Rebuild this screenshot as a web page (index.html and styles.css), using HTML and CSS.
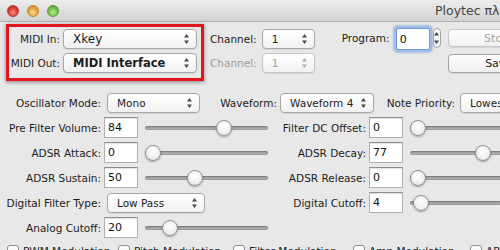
FILE: index.html
```html
<!DOCTYPE html>
<html lang="en">
<head>
    <meta charset="UTF-8">
    <meta name="viewport" content="width=device-width, initial-scale=1.0">
    <title>Ploytec πλ2</title>
    <link rel="stylesheet" href="styles.css">
</head>
<body>

<div class="window">
    <div class="titlebar">
        <span class="light close"></span>
        <span class="light minimize"></span>
        <span class="light zoom"></span>
        <span class="title">Ploytec πλ2</span>
    </div>

    <div class="top">
        <div class="midi-box">
            <div class="top-row">
                <label class="midi-label">MIDI In:</label>
                <div class="popup midi-popup">
                    <span>Xkey</span>
                    <svg class="arrows" width="5" height="10" viewBox="0 0 5 10"><path d="M2.5 0L5 3.5H0Z M2.5 10L5 6.5H0Z"/></svg>
                </div>
            </div>
            <div class="top-row">
                <label class="midi-label">MIDI Out:</label>
                <div class="popup midi-popup bold">
                    <span>MIDI Interface</span>
                    <svg class="arrows" width="5" height="10" viewBox="0 0 5 10"><path d="M2.5 0L5 3.5H0Z M2.5 10L5 6.5H0Z"/></svg>
                </div>
            </div>
        </div>

        <div class="channels">
            <div class="top-row">
                <label>Channel:</label>
                <div class="popup channel-popup">
                    <span>1</span>
                    <svg class="arrows" width="5" height="10" viewBox="0 0 5 10"><path d="M2.5 0L5 3.5H0Z M2.5 10L5 6.5H0Z"/></svg>
                </div>
            </div>
            <div class="top-row disabled">
                <label>Channel:</label>
                <div class="popup channel-popup">
                    <span>1</span>
                    <svg class="arrows" width="5" height="10" viewBox="0 0 5 10"><path d="M2.5 0L5 3.5H0Z M2.5 10L5 6.5H0Z"/></svg>
                </div>
            </div>
        </div>

        <div class="program">
            <label for="program">Program:</label>
            <input type="text" id="program" class="field focused" value="0">
            <div class="stepper">
                <svg width="5" height="12" viewBox="0 0 5 12"><path d="M2.5 0L5 3.5H0Z M2.5 12L5 8.5H0Z"/></svg>
            </div>
        </div>

        <div class="buttons">
            <button type="button" class="push" disabled>Store</button>
            <button type="button" class="push">Save</button>
        </div>
    </div>

    <div class="first-row">
        <label class="label">Oscillator Mode:</label>
        <div class="popup mode-popup">
            <span>Mono</span>
            <svg class="arrows" width="5" height="10" viewBox="0 0 5 10"><path d="M2.5 0L5 3.5H0Z M2.5 10L5 6.5H0Z"/></svg>
        </div>
        <label class="waveform-label">Waveform:</label>
        <div class="popup wave-popup">
            <span>Waveform 4</span>
            <svg class="arrows" width="5" height="10" viewBox="0 0 5 10"><path d="M2.5 0L5 3.5H0Z M2.5 10L5 6.5H0Z"/></svg>
        </div>
        <label class="priority-label">Note Priority:</label>
        <div class="popup priority-popup">
            <span>Lowest</span>
            <svg class="arrows" width="5" height="10" viewBox="0 0 5 10"><path d="M2.5 0L5 3.5H0Z M2.5 10L5 6.5H0Z"/></svg>
        </div>
    </div>

    <div class="params">
        <label class="label">Pre Filter Volume:</label>
        <div class="cell"><input type="text" class="field" value="84"></div>
        <input type="range" class="slider" min="0" max="127" value="84">
        <label class="label">Filter DC Offset:</label>
        <div class="cell"><input type="text" class="field" value="0"></div>
        <input type="range" class="slider" min="0" max="127" value="0">

        <label class="label">ADSR Attack:</label>
        <div class="cell"><input type="text" class="field" value="0"></div>
        <input type="range" class="slider" min="0" max="127" value="0">
        <label class="label">ADSR Decay:</label>
        <div class="cell"><input type="text" class="field" value="77"></div>
        <input type="range" class="slider" min="0" max="127" value="77">

        <label class="label">ADSR Sustain:</label>
        <div class="cell"><input type="text" class="field" value="50"></div>
        <input type="range" class="slider" min="0" max="127" value="50">
        <label class="label">ADSR Release:</label>
        <div class="cell"><input type="text" class="field" value="0"></div>
        <input type="range" class="slider" min="0" max="127" value="0">

        <label class="label">Digital Filter Type:</label>
        <div class="cell span-2">
            <div class="popup filter-popup">
                <span>Low Pass</span>
                <svg class="arrows" width="5" height="10" viewBox="0 0 5 10"><path d="M2.5 0L5 3.5H0Z M2.5 10L5 6.5H0Z"/></svg>
            </div>
        </div>
        <label class="label">Digital Cutoff:</label>
        <div class="cell"><input type="text" class="field" value="4"></div>
        <input type="range" class="slider" min="0" max="127" value="4">

        <label class="label">Analog Cutoff:</label>
        <div class="cell"><input type="text" class="field" value="20"></div>
        <input type="range" class="slider" min="0" max="127" value="20">
    </div>

    <div class="checks">
        <label class="check"><input type="checkbox"> PWM Modulation</label>
        <label class="check"><input type="checkbox"> Pitch Modulation</label>
        <label class="check"><input type="checkbox"> Filter Modulation</label>
        <label class="check"><input type="checkbox"> Amp Modulation</label>
        <label class="check"><input type="checkbox"> AR Modulation</label>
    </div>
</div>

</body>
</html>
```

FILE: styles.css
```css
body {
    margin: 0;
    background-color: #e8e8e8;
    font-family: "DejaVu Sans", sans-serif;
    font-size: 10.5px;
    color: #1c1c1c;
    overflow: hidden;
}

.window {
    width: 660px;
}

/* title bar */

.titlebar {
    height: 22px;
    box-sizing: border-box;
    display: flex;
    align-items: center;
    gap: 8px;
    padding-left: 7px;
    background: linear-gradient(#ececec, #d2d2d2);
    border-bottom: 1px solid #b2b2b2;
}

.light {
    width: 12px;
    height: 12px;
    border-radius: 50%;
    box-sizing: border-box;
}

.close {
    background: radial-gradient(circle at 50% 65%, #ff8a84, #d8332d 60%, #a8241f);
    border: 1px solid #b23a35;
}

.minimize {
    background: radial-gradient(circle at 50% 65%, #ffd68a, #e0a03a 60%, #b57a22);
    border: 1px solid #b88532;
}

.zoom {
    background: radial-gradient(circle at 50% 65%, #b8f09a, #6abb47 60%, #4a8f30);
    border: 1px solid #5a9a3e;
}

.title {
    margin-left: 368px;
    font-size: 12.5px;
    color: #444;
    white-space: nowrap;
}

/* top area */

.top {
    display: flex;
    align-items: flex-start;
    padding: 2px 0 0 6px;
}

.midi-box {
    width: 198px;
    height: 57px;
    box-sizing: border-box;
    border: 3px solid #e3141b;
    box-shadow: 0 1px 4px rgba(0, 0, 0, 0.45);
    padding: 2px 4px 0 0;
    display: flex;
    flex-direction: column;
    gap: 4px;
}

.top-row {
    display: flex;
    align-items: center;
    gap: 3px;
}

.midi-label {
    width: 51px;
    text-align: right;
}

.channels {
    display: flex;
    flex-direction: column;
    gap: 4px;
    margin-left: 6px;
    padding-top: 5px;
}

.channels .top-row {
    gap: 5px;
}

.disabled label {
    color: #9c9c9c;
}

.disabled .popup {
    color: #a0a0a0;
    border-color: #c4c4c4;
}

.disabled .arrows {
    fill: #b0b0b0;
}

.program {
    display: flex;
    align-items: flex-start;
    margin-left: 27px;
    padding-top: 4px;
}

.program label {
    margin-top: 4px;
    width: 51px;
}

.stepper {
    width: 8px;
    height: 20px;
    margin-left: 3px;
    box-sizing: border-box;
    border: 1px solid #a3a3a3;
    border-radius: 4px;
    background: linear-gradient(#fff, #eee);
    display: flex;
    align-items: center;
    justify-content: center;
}

.stepper svg {
    fill: #444;
}

.buttons {
    display: flex;
    flex-direction: column;
    gap: 7px;
    margin-left: 7px;
    padding-top: 5px;
}

.push {
    width: 102px;
    height: 18px;
    padding: 0;
    font-family: inherit;
    font-size: 11px;
    color: #1c1c1c;
    background: linear-gradient(#fefefe, #f0f0f0);
    border: 1px solid #a4a4a4;
    border-radius: 4px;
    box-shadow: 0 1px 1px rgba(0, 0, 0, 0.08);
}

.push:last-child {
    height: 19px;
}

.push:disabled {
    color: #a3a3a3;
    border-color: #c6c6c6;
}

/* popup menus */

.popup {
    height: 20px;
    box-sizing: border-box;
    display: flex;
    align-items: center;
    justify-content: space-between;
    padding: 0 7px 0 9px;
    background: linear-gradient(#ffffff, #f1f1f1);
    border: 1px solid #a6a6a6;
    border-radius: 4px;
    box-shadow: 0 1px 1px rgba(0, 0, 0, 0.08);
    white-space: nowrap;
}

.arrows {
    fill: #4a4a4a;
    flex: none;
}

.midi-popup {
    width: 134px;
    font-size: 12px;
}

.bold {
    font-weight: bold;
    font-size: 11.5px;
}

.channel-popup {
    width: 53px;
}

.mode-popup {
    width: 93px;
    margin-left: 6px;
}

.wave-popup {
    width: 94px;
    margin-left: 3px;
}

.priority-popup {
    width: 100px;
    margin-left: 5px;
}

.filter-popup {
    width: 98px;
    margin-left: 6px;
}

.waveform-label {
    width: 77px;
    text-align: right;
}

.priority-label {
    width: 81px;
    text-align: right;
}

/* parameter rows */

.first-row {
    display: flex;
    align-items: center;
    height: 25px;
    margin-top: 9px;
}

.label {
    width: 101px;
    text-align: right;
    white-space: nowrap;
}

.params {
    display: grid;
    grid-template-columns: 101px 44px 123px 98px 44px 123px;
    grid-auto-rows: 25px;
    align-items: center;
}

.params .label {
    width: auto;
}

.cell {
    display: flex;
    align-items: center;
}

.span-2 {
    grid-column: span 2;
}

.field {
    width: 34px;
    height: 21px;
    margin: 0 0 0 3px;
    box-sizing: border-box;
    padding: 0 3px;
    font-family: inherit;
    font-size: 11px;
    color: #111;
    background: #fff;
    border: 1px solid #b0b0b0;
    border-top-color: #8e8e8e;
    box-shadow: inset 0 1px 1px rgba(0, 0, 0, 0.12);
    outline: none;
}

.focused {
    height: 22px;
    border-color: #6e98d2;
    border-radius: 2px;
    box-shadow: 0 0 0 2px #9cbde8, 0 0 2px 3px rgba(110, 150, 210, 0.5);
}

.slider {
    -webkit-appearance: none;
    appearance: none;
    width: 123px;
    height: 18px;
    margin: 0;
    background: transparent;
}

.slider::-webkit-slider-runnable-track {
    height: 4px;
    border-radius: 3px;
    background: linear-gradient(#8f8f8f, #bdbdbd);
    box-shadow: inset 0 0 0 1px rgba(0, 0, 0, 0.15);
}

.slider::-webkit-slider-thumb {
    -webkit-appearance: none;
    width: 16px;
    height: 16px;
    margin-top: -6px;
    box-sizing: border-box;
    border-radius: 50%;
    border: 1px solid #909090;
    background: radial-gradient(circle at 50% 35%, #ffffff, #ececec 70%, #d8d8d8);
    box-shadow: 0 1px 2px rgba(0, 0, 0, 0.3);
}

/* checkboxes */

.checks {
    display: grid;
    grid-template-columns: 111px 115px 120px 117px 100px;
    padding-left: 7px;
    margin-top: 5px;
}

.check {
    display: flex;
    align-items: center;
    gap: 4px;
    white-space: nowrap;
}

.check input {
    -webkit-appearance: none;
    appearance: none;
    width: 12px;
    height: 12px;
    margin: 0;
    border: 1px solid #8e8e8e;
    border-radius: 3px;
    background: linear-gradient(#fff, #ececec);
}
```
